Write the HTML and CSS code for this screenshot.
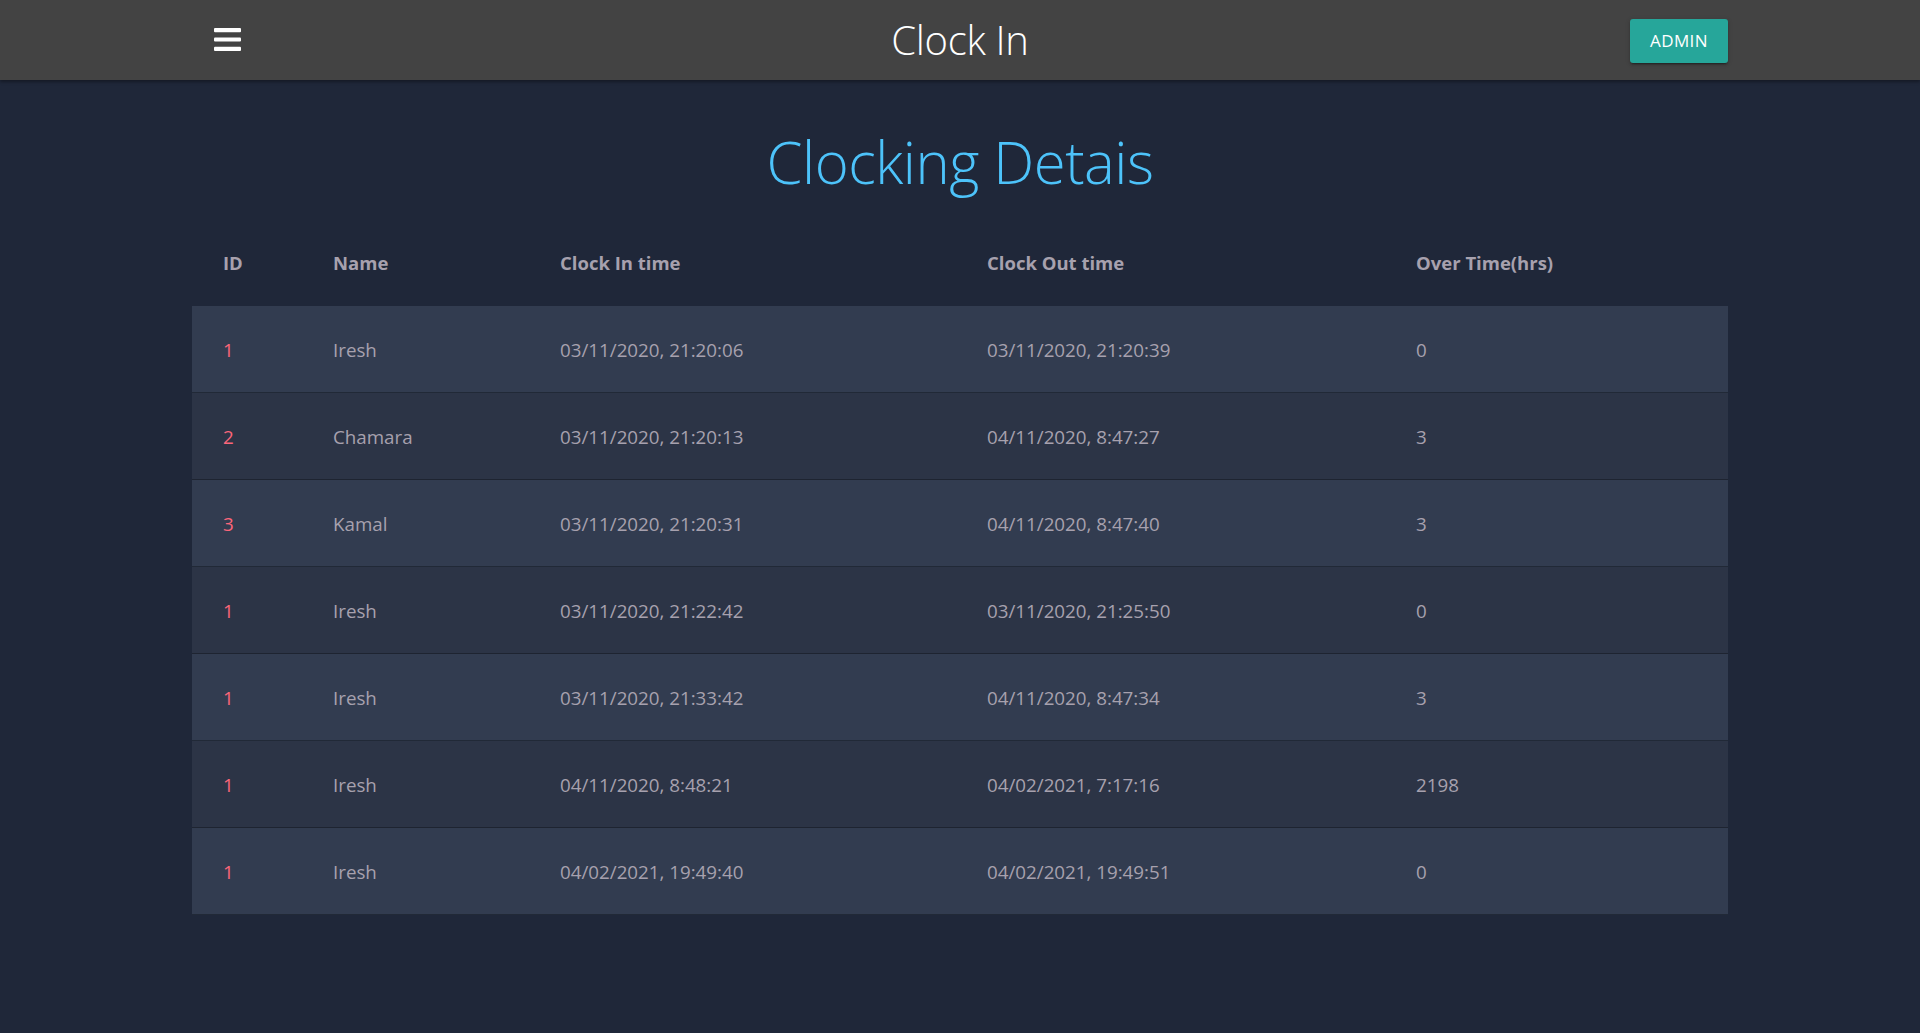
FILE: index.html
```html
<!DOCTYPE html>
<html lang="en">
<head>
<meta charset="utf-8">
<title>Clock In</title>
<link rel="stylesheet" href="styles.css">
</head>
<body>
<header class="topbar">
  <div class="topbar-inner">
    <button class="menu-btn" aria-label="Menu">
      <svg width="27" height="24" viewBox="0 0 27 24"><rect x="0" y="0" width="27" height="4.2" rx="1" fill="#fff"/><rect x="0" y="9.4" width="27" height="4.2" rx="1" fill="#fff"/><rect x="0" y="18.8" width="27" height="4.2" rx="1" fill="#fff"/></svg>
    </button>
    <div class="brand">Clock In</div>
    <a class="admin-btn" href="#">ADMIN</a>
  </div>
</header>
<main>
  <h1 class="title">Clocking Detais</h1>
  <table class="clock-table">
    <colgroup>
      <col class="c-id"><col class="c-name"><col class="c-in"><col class="c-out"><col class="c-ot">
    </colgroup>
    <thead>
      <tr><th>ID</th><th>Name</th><th>Clock In time</th><th>Clock Out time</th><th>Over Time(hrs)</th></tr>
    </thead>
    <tbody>
      <tr><td>1</td><td>Iresh</td><td>03/11/2020, 21:20:06</td><td>03/11/2020, 21:20:39</td><td>0</td></tr>
      <tr><td>2</td><td>Chamara</td><td>03/11/2020, 21:20:13</td><td>04/11/2020, 8:47:27</td><td>3</td></tr>
      <tr><td>3</td><td>Kamal</td><td>03/11/2020, 21:20:31</td><td>04/11/2020, 8:47:40</td><td>3</td></tr>
      <tr><td>1</td><td>Iresh</td><td>03/11/2020, 21:22:42</td><td>03/11/2020, 21:25:50</td><td>0</td></tr>
      <tr><td>1</td><td>Iresh</td><td>03/11/2020, 21:33:42</td><td>04/11/2020, 8:47:34</td><td>3</td></tr>
      <tr><td>1</td><td>Iresh</td><td>04/11/2020, 8:48:21</td><td>04/02/2021, 7:17:16</td><td>2198</td></tr>
      <tr><td>1</td><td>Iresh</td><td>04/02/2021, 19:49:40</td><td>04/02/2021, 19:49:51</td><td>0</td></tr>
    </tbody>
  </table>
</main>
</body>
</html>
```
FILE: styles.css
```css
* { box-sizing: border-box; }
html, body { margin: 0; padding: 0; }
body {
  font-family: "Open Sans", "Liberation Sans", sans-serif;
  font-weight: 400;
  font-size: 18.75px;
  color: #A7A1AE;
  background-color: #1F2739;
  min-height: 1033px;
}
.topbar {
  height: 80px;
  background: #434343;
  box-shadow: 0 2px 3px rgba(0,0,0,0.35);
  position: relative;
  z-index: 2;
}
.topbar-inner {
  width: 1536px;
  margin: 0 auto;
  height: 80px;
  display: flex;
  align-items: center;
  justify-content: space-between;
  position: relative;
}
.menu-btn {
  background: none;
  border: 0;
  padding: 0;
  margin-left: 22px;
  margin-top: 0;
  width: 27px;
  height: 24px;
  display: block;
}
.menu-btn svg { display: block; }
.brand {
  position: absolute;
  left: 50%;
  top: 0;
  transform: translateX(-50%);
  line-height: 80px;
  font-size: 40px;
  font-weight: 300;
  color: #fff;
  letter-spacing: -0.3px;
}
.admin-btn {
  display: block;
  width: 98px;
  height: 44px;
  line-height: 44px;
  text-align: center;
  background: #26A69A;
  color: #fff;
  text-decoration: none;
  font-size: 17px;
  letter-spacing: 0.4px;
  border-radius: 3px;
  box-shadow: 0 2px 2px rgba(0,0,0,0.18), 0 3px 1px -2px rgba(0,0,0,0.2), 0 1px 5px rgba(0,0,0,0.16);
  margin-top: 2px;
}
main { padding-bottom: 100px; }
.title {
  margin: 52px 0 0;
  height: 60px;
  font-size: 58px;
  line-height: 60px;
  font-weight: 300;
  text-align: center;
  color: #4DC3FA;
  letter-spacing: -0.5px;
}
.clock-table {
  width: 1536px;
  margin: 27px auto 0;
  border-collapse: collapse;
  table-layout: fixed;
  text-align: left;
}
.c-id { width: 110px; }
.c-name { width: 227px; }
.c-in { width: 427px; }
.c-out { width: 429px; }
.c-ot { width: 343px; }
.clock-table th, .clock-table td {
  height: 87px;
  padding: 0 0 0 31px;
  line-height: 28px;
  vertical-align: middle;
}
.clock-table th {
  font-weight: 700;
  font-size: 18.5px;
  color: #A7A1AE;
  background: #1F2739;
}
.clock-table td {
  font-weight: 400;
  box-shadow: inset 0 -1px 0 rgba(14,17,25,0.45);
}
.clock-table tbody tr:nth-child(odd) { background-color: #323C50; }
.clock-table tbody tr:nth-child(even) { background-color: #2C3446; }
.clock-table td:first-child { color: #FB667A; }
```
